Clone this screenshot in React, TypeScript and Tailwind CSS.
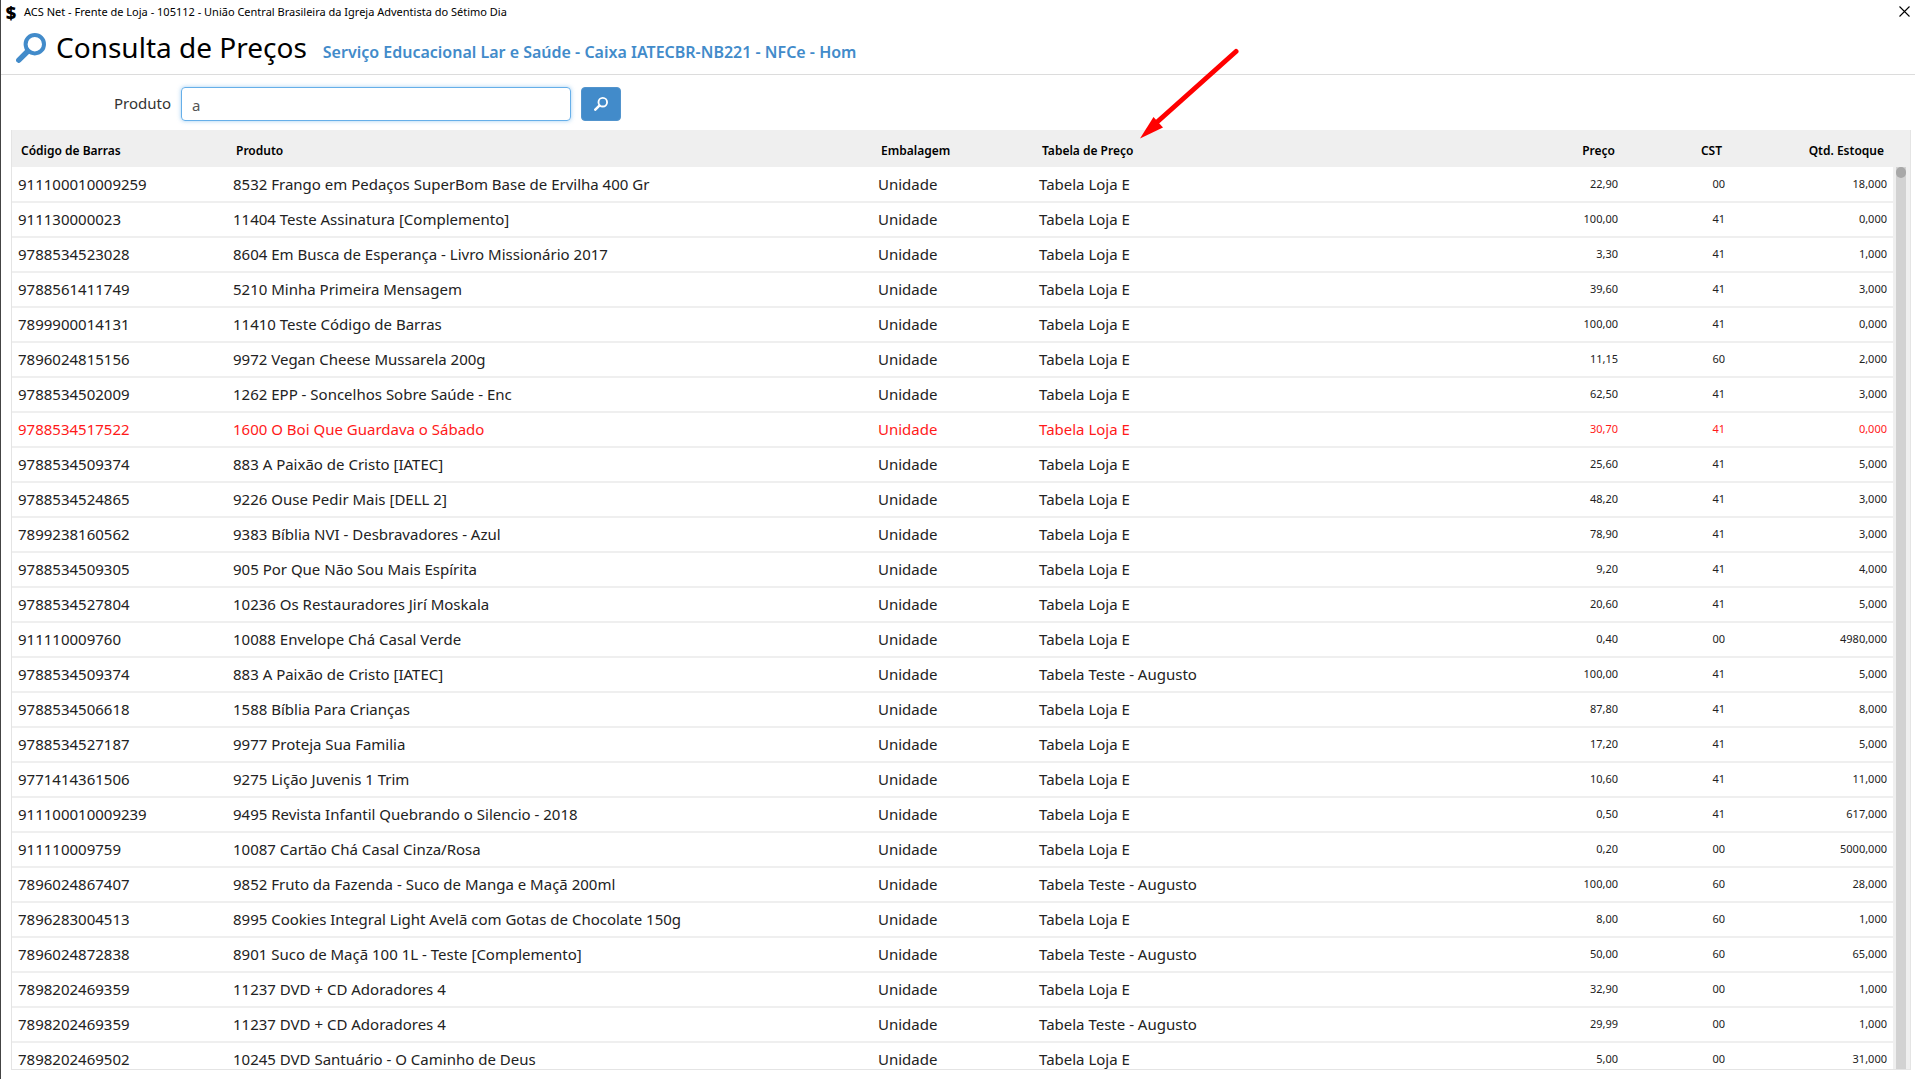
import { useState } from 'react';

type Product = {
  barcode: string;
  name: string;
  table: string;
  price: string;
  cst: string;
  stock: string;
  highlight?: boolean;
};

const LOJA = 'Tabela Loja E';
const AUGUSTO = 'Tabela Teste - Augusto';

const products: Product[] = [
  { barcode: '911100010009259', name: '8532 Frango em Pedaços SuperBom Base de Ervilha 400 Gr', table: LOJA, price: '22,90', cst: '00', stock: '18,000' },
  { barcode: '911130000023', name: '11404 Teste Assinatura [Complemento]', table: LOJA, price: '100,00', cst: '41', stock: '0,000' },
  { barcode: '9788534523028', name: '8604 Em Busca de Esperança - Livro Missionário 2017', table: LOJA, price: '3,30', cst: '41', stock: '1,000' },
  { barcode: '9788561411749', name: '5210 Minha Primeira Mensagem', table: LOJA, price: '39,60', cst: '41', stock: '3,000' },
  { barcode: '7899900014131', name: '11410 Teste Código de Barras', table: LOJA, price: '100,00', cst: '41', stock: '0,000' },
  { barcode: '7896024815156', name: '9972 Vegan Cheese Mussarela 200g', table: LOJA, price: '11,15', cst: '60', stock: '2,000' },
  { barcode: '9788534502009', name: '1262 EPP - Soncelhos Sobre Saúde - Enc', table: LOJA, price: '62,50', cst: '41', stock: '3,000' },
  { barcode: '9788534517522', name: '1600 O Boi Que Guardava o Sábado', table: LOJA, price: '30,70', cst: '41', stock: '0,000', highlight: true },
  { barcode: '9788534509374', name: '883 A Paixão de Cristo [IATEC]', table: LOJA, price: '25,60', cst: '41', stock: '5,000' },
  { barcode: '9788534524865', name: '9226 Ouse Pedir Mais [DELL 2]', table: LOJA, price: '48,20', cst: '41', stock: '3,000' },
  { barcode: '7899238160562', name: '9383 Bíblia NVI - Desbravadores - Azul', table: LOJA, price: '78,90', cst: '41', stock: '3,000' },
  { barcode: '9788534509305', name: '905 Por Que Não Sou Mais Espírita', table: LOJA, price: '9,20', cst: '41', stock: '4,000' },
  { barcode: '9788534527804', name: '10236 Os Restauradores Jirí Moskala', table: LOJA, price: '20,60', cst: '41', stock: '5,000' },
  { barcode: '911110009760', name: '10088 Envelope Chá Casal Verde', table: LOJA, price: '0,40', cst: '00', stock: '4980,000' },
  { barcode: '9788534509374', name: '883 A Paixão de Cristo [IATEC]', table: AUGUSTO, price: '100,00', cst: '41', stock: '5,000' },
  { barcode: '9788534506618', name: '1588 Bíblia Para Crianças', table: LOJA, price: '87,80', cst: '41', stock: '8,000' },
  { barcode: '9788534527187', name: '9977 Proteja Sua Familia', table: LOJA, price: '17,20', cst: '41', stock: '5,000' },
  { barcode: '9771414361506', name: '9275 Lição Juvenis 1 Trim', table: LOJA, price: '10,60', cst: '41', stock: '11,000' },
  { barcode: '911100010009239', name: '9495 Revista Infantil Quebrando o Silencio - 2018', table: LOJA, price: '0,50', cst: '41', stock: '617,000' },
  { barcode: '911110009759', name: '10087 Cartão Chá Casal Cinza/Rosa', table: LOJA, price: '0,20', cst: '00', stock: '5000,000' },
  { barcode: '7896024867407', name: '9852 Fruto da Fazenda - Suco de Manga e Maçã 200ml', table: AUGUSTO, price: '100,00', cst: '60', stock: '28,000' },
  { barcode: '7896283004513', name: '8995 Cookies Integral Light Avelã com Gotas de Chocolate 150g', table: LOJA, price: '8,00', cst: '60', stock: '1,000' },
  { barcode: '7896024872838', name: '8901 Suco de Maçã 100 1L - Teste [Complemento]', table: AUGUSTO, price: '50,00', cst: '60', stock: '65,000' },
  { barcode: '7898202469359', name: '11237 DVD + CD Adoradores 4', table: LOJA, price: '32,90', cst: '00', stock: '1,000' },
  { barcode: '7898202469359', name: '11237 DVD + CD Adoradores 4', table: AUGUSTO, price: '29,99', cst: '00', stock: '1,000' },
  { barcode: '7898202469502', name: '10245 DVD Santuário - O Caminho de Deus', table: LOJA, price: '5,00', cst: '00', stock: '31,000' },
];

function SearchIcon({ className }: { className?: string }) {
  return (
    <svg viewBox="0 0 30 30" fill="none" stroke="currentColor" className={className} aria-hidden="true">
      <circle cx="18.8" cy="11.2" r="9.2" strokeWidth="4" />
      <path d="M11.5 18.5 L2.8 27.2" strokeWidth="5.4" strokeLinecap="round" />
    </svg>
  );
}

function TitleBar() {
  return (
    <header className="flex h-[23px] items-center justify-between pl-1 pr-[5px]">
      <div className="flex items-center gap-[7px]">
        <span className="w-3 text-center text-lg leading-[22px] font-black text-black">$</span>
        <span className="text-[11px] leading-[22px] text-black">
          ACS Net - Frente de Loja - 105112 - União Central Brasileira da Igreja Adventista do Sétimo Dia
        </span>
      </div>
      <button type="button" aria-label="Fechar" className="flex h-5 w-3 items-center justify-center text-black">
        <svg viewBox="0 0 11 11" className="size-[11px]" stroke="currentColor" strokeWidth="1.1">
          <path d="M0.5 0.5 L10.5 10.5 M10.5 0.5 L0.5 10.5" />
        </svg>
      </button>
    </header>
  );
}

function PageHeading() {
  return (
    <div className="flex h-[52px] items-start gap-[10px] border-b border-[#dcdcdc] pl-[15px]">
      <SearchIcon className="mt-[10px] size-[30px] shrink-0 text-[#428bca]" />
      <div className="flex items-baseline gap-4">
        <h1 className="text-[28px] leading-[48px] text-black">Consulta de Preços</h1>
        <h2 className="text-[16px] font-semibold text-[#428bca]">
          Serviço Educacional Lar e Saúde - Caixa IATECBR-NB221 - NFCe - Hom
        </h2>
      </div>
    </div>
  );
}

function SearchForm() {
  const [query, setQuery] = useState('a');

  return (
    <form className="flex items-center pt-3 pb-[9px]" onSubmit={(e) => e.preventDefault()}>
      <label htmlFor="produto" className="w-[170px] pb-[2px] text-right text-[15px] text-[#333]">
        Produto
      </label>
      <input
        id="produto"
        type="text"
        value={query}
        onChange={(e) => setQuery(e.target.value)}
        className="ml-[10px] h-[34px] w-[390px] rounded border border-[#66afe9] px-[10px] pt-[2px] text-[15px] text-[#555] shadow-[0_0_4px_rgba(102,175,233,0.6)] outline-none"
      />
      <button
        type="submit"
        aria-label="Pesquisar"
        className="ml-[10px] flex h-[34px] w-10 items-center justify-center rounded border border-[#5294cd] bg-[#428bca] text-white"
      >
        <SearchIcon className="size-[14px]" />
      </button>
    </form>
  );
}

function ProductTable() {
  return (
    <div className="mr-1 mb-[9px] ml-[10px] flex min-h-0 flex-1 overflow-hidden border border-t-0 border-[#e4e4e4] bg-[#efefef]">
      <table className="w-full flex-1 table-fixed border-collapse self-start text-left">
        <colgroup>
          <col className="w-[215px]" />
          <col className="w-[645px]" />
          <col className="w-[161px]" />
          <col />
          <col className="w-[200px]" />
          <col className="w-[107px]" />
          <col className="w-[162px]" />
        </colgroup>
        <thead>
          <tr className="h-[37px] text-[12px] text-black [&>th]:px-[9px] [&>th]:pt-[5px] [&>th]:font-semibold">
            <th>Código de Barras</th>
            <th>Produto</th>
            <th>Embalagem</th>
            <th>Tabela de Preço</th>
            <th className="text-right">Preço</th>
            <th className="text-right">CST</th>
            <th className="text-right">Qtd. Estoque</th>
          </tr>
        </thead>
        <tbody className="text-[15px]">
          {products.map((p, i) => (
            <tr
              key={i}
              className={`h-[35px] border-b-2 border-[#efefef] bg-white [&>td]:px-[6px] ${
                p.highlight ? 'text-[#ff1a1a]' : 'text-[#222]'
              }`}
            >
              <td>{p.barcode}</td>
              <td>{p.name}</td>
              <td>Unidade</td>
              <td>{p.table}</td>
              <td className="text-right text-[11px]">{p.price}</td>
              <td className="text-right text-[11px]">{p.cst}</td>
              <td className="text-right text-[11px]">{p.stock}</td>
            </tr>
          ))}
        </tbody>
      </table>
      <div className="flex w-[17px] shrink-0 pt-[37px] pr-1 pl-[3px]">
        <div className="w-[10px] bg-[#d2d2d2]">
          <div className="h-[11px] rounded-full bg-[#a8a8a8]" />
        </div>
      </div>
    </div>
  );
}

// Red pointer over the "Tabela de Preço" heading
function Pointer() {
  return (
    <svg viewBox="0 0 100 92" className="pointer-events-none absolute top-[48px] left-[1138px] h-[92px] w-[100px]" aria-hidden="true">
      <path d="M17 75 L97 3.5" stroke="#ff0000" strokeWidth="5" strokeLinecap="round" />
      <path d="M1 90.5 L14.5 69 L24 79.5 Z" fill="#ff0000" />
    </svg>
  );
}

export default function App() {
  return (
    <div className="relative flex h-screen flex-col overflow-hidden border-l border-[#444] bg-white font-['Noto_Sans','Open_Sans',sans-serif]">
      <TitleBar />
      <PageHeading />
      <SearchForm />
      <ProductTable />
      <Pointer />
    </div>
  );
}
